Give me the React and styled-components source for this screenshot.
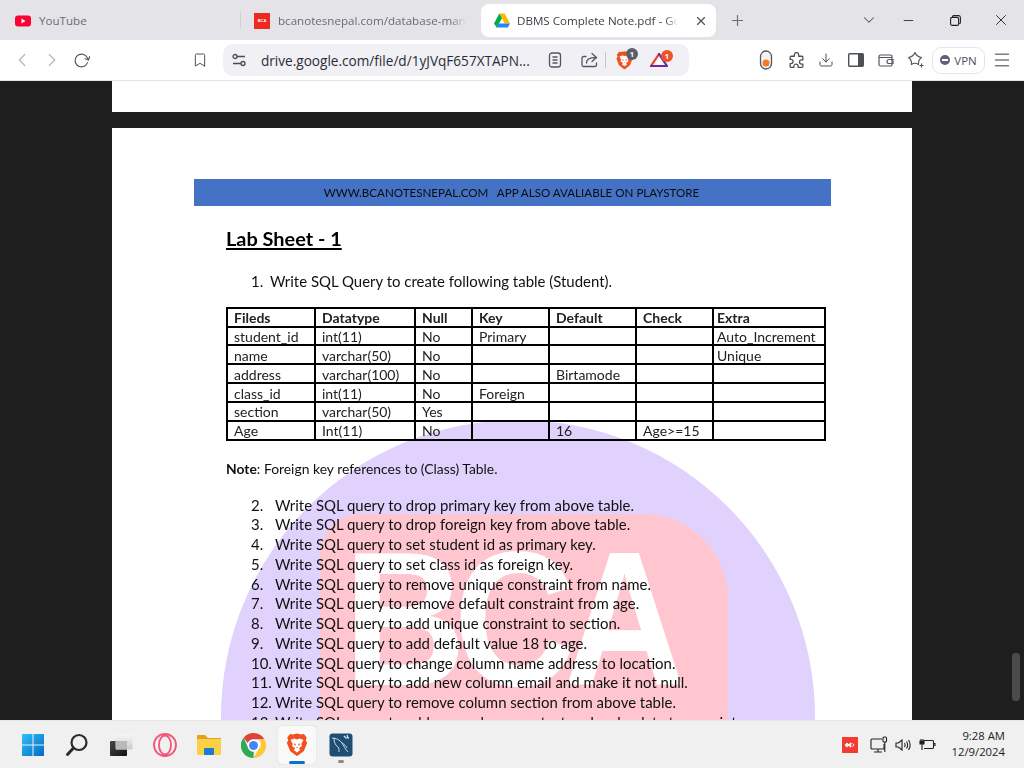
import React from "react";
import styled, { createGlobalStyle } from "styled-components";
import { ChevronLeft, ChevronRight, RotateCw, Bookmark, X, Plus, Minus, ChevronDown, Menu, Download } from "lucide-react";

const Global = createGlobalStyle`
  html, body { margin: 0; padding: 0; height: 100%; overflow: hidden; }
  body { font-family: "Open Sans", "Liberation Sans", sans-serif; background: #1e1e1e; }
  #root { height: 768px; width: 1024px; }
`;

const Screen = styled.div`
  width: 1024px; height: 768px; display: flex; flex-direction: column; overflow: hidden; position: relative;
`;
const TabStrip = styled.div`
  height: 40px; flex: none; display: flex; align-items: center; background: #e3e3e8;
`;
const Tab = styled.div`
  width: ${p => p.$w}px; height: 33px; margin-top: 1px; flex: none; display: flex; align-items: center; gap: ${p => p.$gap || 8}px;
  padding: 0 ${p => p.$pr || 0}px 0 ${p => p.$pl}px; box-sizing: border-box; position: relative;
  background: ${p => (p.$active ? "#fff" : "transparent")}; border-radius: 8px;
`;
const TabSep = styled.div`
  width: 1px; height: 16px; background: #cfcfd4; flex: none;
`;
const TabTitle = styled.span`
  font-size: 11.6px; color: ${p => (p.$active ? "#3c3f47" : "#6b6d75")}; white-space: nowrap; overflow: hidden; flex: 1;
  -webkit-mask-image: ${p => (p.$fade ? "linear-gradient(90deg,#000 92%,transparent)" : "none")};
  mask-image: ${p => (p.$fade ? "linear-gradient(90deg,#000 92%,transparent)" : "none")};
`;
const FaviconBCA = styled.div`
  width: 16px; height: 16px; background: #ee2a20; color: #fff; font: 700 4px "Liberation Sans", sans-serif;
  display: flex; align-items: center; justify-content: center; flex: none;
`;
const StripButton = styled.div`
  width: ${p => p.$w}px; flex: none; display: flex; align-items: center; justify-content: center; color: ${p => p.$c || "#1f2025"};
  margin-left: ${p => p.$ml || 0}px;
`;
const Toolbar = styled.div`
  flex: none; display: flex; align-items: center; background: #fff; padding: 0 7px; box-sizing: border-box; border-bottom: 1px solid #e3e3e8; height: 41px;
`;
const Cell = styled.div`
  width: 30px; height: 30px; flex: none; display: flex; align-items: center; justify-content: center; color: ${p => p.$c || "#4e5058"};
  margin-left: ${p => p.$ml || 0}px;
`;
const UrlPill = styled.div`
  width: 466px; height: 32px; margin-left: 8px; background: #f0f0f5; border-radius: 10px; display: flex; align-items: center; flex: none; padding-left: 8px; box-sizing: border-box;
`;
const UrlText = styled.span`
  font-size: 13.6px; color: #2a2d37; margin-left: 14px; width: 273px; white-space: nowrap; flex: none;
`;
const PillIcon = styled.div`
  width: ${p => p.$w || 24}px; flex: none; display: flex; align-items: center; justify-content: center; position: relative; color: #55575f; margin-left: ${p => p.$ml || 0}px;
`;
const Divider = styled.div`
  width: 1px; height: 16px; background: #c5c6cc; margin-left: 4px; flex: none;
`;
const Badge = styled.span`
  position: absolute; top: -3px; right: ${p => p.$r}px; width: 12px; height: 12px; border-radius: 50%; background: ${p => p.$bg}; color: #fff;
  font: 700 7.5px "Open Sans", sans-serif; display: flex; align-items: center; justify-content: center;
`;
const RightGroup = styled.div`
  margin-left: auto; display: flex; align-items: center;
`;
const Vpn = styled.div`
  width: 53px; height: 27px; margin-left: 1px; box-sizing: border-box; border: 1px solid #e4e4ea; border-radius: 9px; display: flex; align-items: center; justify-content: center; gap: 4px;
  font-size: 11.5px; color: #4e5058;
`;
const VpnDot = styled.span`
  width: 10px; height: 10px; border-radius: 50%; background: #5e6178; display: flex; align-items: center; justify-content: center;
  &::after { content: ""; width: 6px; height: 1.5px; background: #fff; }
`;
const Viewer = styled.main`
  flex: 1; min-height: 0; background: #1e1e1e; overflow: hidden; display: flex; flex-direction: column; align-items: center; gap: 16px; position: relative;
`;
const PageStub = styled.div`
  width: 800px; height: 31px; background: #fff; flex: none;
`;
const Page = styled.article`
  width: 800px; flex: none; background: #fff; position: relative; padding-top: 51px; box-sizing: border-box; height: 1000px; overflow: hidden;
  font-family: Lato, "Open Sans", sans-serif; color: #111;
`;
const Circle = styled.div`
  position: absolute; left: 109px; top: 292px; width: 594px; height: 594px; border-radius: 50%; background: #e0d2fc;
`;
const Square = styled.div`
  position: absolute; left: 208px; top: 386px; width: 408px; height: 500px; background: #ffc6d0; border-radius: 40px 85px 0 0;
`;
const WaterText = styled.div`
  position: absolute; left: 232px; top: 395px; font: 700 192px/1 "Liberation Sans", sans-serif; color: #fff; letter-spacing: -14px; white-space: nowrap;
  transform: scaleX(0.88); transform-origin: left top;
`;
const Content = styled.div`
  position: relative; filter: blur(0.25px);
`;
const Band = styled.div`
  width: 637px; height: 27px; margin-left: 82px; padding-right: 2px; box-sizing: border-box; background: #4472c4; display: flex; align-items: center; justify-content: center;
  font-size: 11.6px; color: #0c0c0c; white-space: pre;
`;
const Body = styled.div`
  padding-left: 114px; width: 599px;
`;
const Heading = styled.h1`
  margin: 20px 0 0; font-size: 19.9px; line-height: 24px; font-weight: 700; color: #000;
  text-decoration: underline; text-decoration-thickness: 2px; text-underline-offset: 2px;
`;
const Item = styled.div`
  display: flex; margin-left: 25px; margin-top: ${p => p.$mt || 0}px; font-size: ${p => p.$fs || 14.95}px; line-height: 19.75px; white-space: nowrap;
`;
const Num = styled.span`
  width: ${p => p.$w}px; flex: none;
`;
const Table = styled.table`
  border-collapse: collapse; table-layout: fixed; width: 598px; margin-top: 15px; font-size: 14px; border: 2px solid #000;
`;
const Td = styled.td`
  border: 2px solid #000; height: 15.33px; padding: 1.5px 0 0 ${p => p.$pl}px; line-height: 15.33px; white-space: nowrap; overflow: hidden; font-weight: ${p => (p.$h ? 700 : 400)};
  color: #222;
`;
const Note = styled.p`
  margin: 18px 0 0; font-size: 13.9px; line-height: 20px;
`;
const List = styled.div`
  margin-top: 17px;
`;
const Scrollbar = styled.div`
  position: absolute; right: 4px; top: 572px; width: 8px; height: 48px; background: #4a4c4b; border-radius: 4px;
`;
const Taskbar = styled.footer`
  height: 48px; flex: none; background: #f0f0f0; border-top: 1px solid #e6e6e6; box-sizing: border-box; display: flex; align-items: center; gap: 6px; padding-left: 14px; padding-right: 19px;
`;
const Pin = styled.div`
  width: 38px; height: 38px; flex: none; display: flex; align-items: center; justify-content: center; position: relative;
  margin-top: 1px; border-radius: 4px;
  background: ${p => (p.$open ? "#f9f9f9" : "transparent")};
  box-shadow: ${p => (p.$open ? "0 0 1px rgba(0,0,0,.25)" : "none")};
  &::after {
    content: ""; position: absolute; bottom: ${p => (p.$open ? "0" : "1px")}; left: 50%; transform: translateX(-50%);
    height: 3px; border-radius: 2px; width: ${p => (p.$open ? "16px" : p.$run ? "6px" : "0")}; background: ${p => (p.$open ? "#0a6fd1" : "#8a8a8a")};
  }
`;
const Tray = styled.div`
  margin-left: auto; display: flex; align-items: center; color: #222;
`;
const TrayIcon = styled.div`
  width: 24px; display: flex; justify-content: center; flex: none; margin-left: ${p => p.$ml || 0}px;
`;
const Clock = styled.div`
  margin-left: 12px; margin-top: -2px; text-align: right; font-size: 11.3px; line-height: 16px; color: #1c1c1c;
`;

const Slider = () => (
  <svg width="16" height="16" viewBox="0 0 16 16" fill="none" stroke="#4a4c55" strokeWidth="1.3">
    <circle cx="4" cy="4.5" r="2" /><circle cx="12" cy="11.5" r="2" />
    <path d="M6 4.5h8M2 11.5h8" />
  </svg>
);
const Doc = () => (
  <svg width="14" height="16" viewBox="0 0 14 16" fill="none" stroke="#55575f" strokeWidth="1.3">
    <rect x="1.5" y="1" width="11" height="14" rx="2.5" /><path d="M4.5 5h5M4.5 8h5M4.5 11h5" />
  </svg>
);
const Share = () => (
  <svg width="17" height="16" viewBox="0 0 17 16" fill="none" stroke="#55575f" strokeWidth="1.3" strokeLinejoin="round" strokeLinecap="round">
    <path d="M5 4.500H3a2 2 0 0 0-2 2V13a1.500 1.500 0 0 0 1.500 1.500h11.500A1.500 1.500 0 0 0 15.500 13V11" />
    <path d="M5.500 11C5.500 7.500 8 5.500 15 5.500" /><path d="M11 1.500 15.500 5.500 11 9.500" />
  </svg>
);
const BraveLogo = ({ size = 18 }) => (
  <svg width={size} height={size} viewBox="0 0 24 26">
    <path fill="#f1501f" d="M12 0.500 16.500 1.500 19.500 1 22.500 5 21.500 8 23 10.500 19.500 19.500 13 24.500 12 25 11 24.500 4.500 19.500 1 10.500 2.500 8 1.500 5 4.500 1 7.500 1.500Z" />
    <path fill="#fff" d="M12 7 15 6 19 7.500 16.500 12 17.500 14 14 16.500 15.500 18.500 12 21 8.500 18.500 10 16.500 6.500 14 7.500 12 5 7.500 9 6Z" />
    <path fill="#f1501f" d="M9.500 10.500 11 13 9 13.500ZM14.500 10.500 13 13 15 13.500ZM12 15l-1.500 1h3Z" />
  </svg>
);
const Triangle = () => (
  <svg width="18" height="14" viewBox="0 0 18 14">
    <path d="M9 1 1 13" fill="none" stroke="#ef3a25" strokeWidth="2.200" strokeLinecap="round" />
    <path d="M9 1 17 13H1" fill="none" stroke="#6d2aa0" strokeWidth="2.200" strokeLinejoin="round" strokeLinecap="round" />
    <path d="M9 6 12.500 11.500H5.500Z" fill="#fff" />
  </svg>
);
const Capsule = () => (
  <svg width="14" height="20" viewBox="0 0 14 20" fill="none">
    <rect x="1.500" y="1" width="11" height="18" rx="5.500" stroke="#55575f" strokeWidth="1.300" fill="#f2f2f4" />
    <circle cx="7" cy="13" r="3.500" fill="#f47b20" />
  </svg>
);
const PuzzleIcon = () => (
  <svg width="17" height="17" viewBox="0 0 16 16" fill="none" stroke="#4e5058" strokeWidth="1.200" strokeLinejoin="round">
    <path d="M6 2.500a2 2 0 0 1 4 0V4h3a1 1 0 0 1 1 1v2.500h-1.200a2 2 0 0 0 0 4H14v2a1 1 0 0 1-1 1H9.500v-1a2 2 0 0 0-4 0v1H3a1 1 0 0 1-1-1v-2.500h.8a2 2 0 0 0 0-4H2V5a1 1 0 0 1 1-1h3Z" />
  </svg>
);
const SidebarIcon = () => (
  <svg width="16" height="14" viewBox="0 0 16 14">
    <rect x="0.700" y="0.700" width="14.600" height="12.600" rx="1" fill="none" stroke="#4e5058" strokeWidth="1.400" />
    <rect x="10" y="1" width="5" height="12" fill="#4e5058" />
  </svg>
);
const Wallet = () => (
  <svg width="16" height="14" viewBox="0 0 16 14" fill="none" stroke="#55575f" strokeWidth="1.200">
    <path d="M1 3.500V11.500A1.500 1.500 0 0 0 2.500 13h10a1.500 1.500 0 0 0 1.500-1.500V3.500A1.500 1.500 0 0 0 12.500 2H2.500A1.500 1.500 0 0 0 1 3.500Z" />
    <path d="M1 4.500h13M15 6.500h-4a1.500 1.500 0 0 0 0 4h4Z" />
  </svg>
);
const Sparkle = () => (
  <svg width="18" height="18" viewBox="0 0 18 18" fill="none" stroke="#55575f" strokeWidth="1.200" strokeLinejoin="round">
    <path d="M8 1.500Q9.500 5.500 14.500 6.500Q11 9 11.500 13.500Q8 11 4.500 13.500Q5 9 1.500 6.500Q6.500 5.500 8 1.500Z" />
    <path d="M14.500 12.500v4M12.500 14.500h4" />
  </svg>
);
const WinLogo = () => (
  <svg width="24" height="24" viewBox="0 0 24 24">
    <defs><linearGradient id="w" x1="0" y1="0" x2="1" y2="1"><stop offset="0" stopColor="#2dc1f5" /><stop offset="1" stopColor="#0669c9" /></linearGradient></defs>
    <path fill="url(#w)" d="M1 1h10.500v10.500H1zM12.500 1H23v10.500H12.500zM1 12.500h10.500V23H1zM12.500 12.500H23V23H12.500z" />
  </svg>
);
const SearchIcon = () => (
  <svg width="24" height="24" viewBox="0 0 24 24" fill="none" stroke="#2b2b2b" strokeLinecap="round">
    <circle cx="14" cy="9.500" r="7.500" strokeWidth="2.200" /><path d="M8.500 15 2.500 21.500" strokeWidth="3" />
  </svg>
);
const TaskView = () => (
  <svg width="24" height="24" viewBox="0 0 24 24">
    <defs><linearGradient id="t" x1="0" y1="0" x2="0" y2="1"><stop offset="0" stopColor="#f7f7f7" /><stop offset="1" stopColor="#c9c9c9" /></linearGradient>
      <linearGradient id="td" x1="0" y1="0" x2="1" y2="1"><stop offset="0" stopColor="#484848" /><stop offset="1" stopColor="#111" /></linearGradient></defs>
    <rect x="1" y="8" width="17" height="15" rx="1" fill="url(#td)" />
    <rect x="6.500" y="1.500" width="17" height="15" rx="1" fill="url(#t)" />
    <rect x="7" y="8" width="11" height="8.500" fill="#b9b9b9" />
  </svg>
);
const Opera = () => (
  <svg width="26" height="26" viewBox="0 0 26 26" fill="none" stroke="#f1567a">
    <circle cx="13" cy="13" r="11" strokeWidth="1.800" /><ellipse cx="13" cy="13" rx="6" ry="9.500" strokeWidth="1.800" />
  </svg>
);
const Folder = () => (
  <svg width="26" height="24" viewBox="0 0 26 24">
    <path fill="#e2a21a" d="M1 3a1 1 0 0 1 1-1h7l3 3h13v5H1z" />
    <path fill="#fbd045" d="M1 6h24v15a1 1 0 0 1-1 1H2a1 1 0 0 1-1-1z" />
    <rect x="8" y="15" width="10" height="7" rx="1" fill="#1a7bd0" />
  </svg>
);
const Chrome = () => (
  <svg width="25" height="25" viewBox="0 0 24 24">
    <path fill="#db4437" d="M12 0a12 12 0 0 1 10.400 6H12a6 6 0 0 0-5.600 3.700L2.500 4.500A12 12 0 0 1 12 0Z" />
    <path fill="#fcc934" d="M22.400 6A12 12 0 0 1 12 24l5.200-9a6 6 0 0 0 0-9Z" />
    <path fill="#33a853" d="M2.500 4.500 7.200 15a6 6 0 0 0 5 3l-.2 6A12 12 0 0 1 2.500 4.500Z" />
    <circle cx="12" cy="12" r="5.500" fill="#fff" /><circle cx="12" cy="12" r="4.300" fill="#4285f4" />
  </svg>
);
const Workbench = () => (
  <svg width="24" height="24" viewBox="0 0 24 24">
    <rect x="0.500" y="0.500" width="23" height="23" rx="3" fill="#1f4e74" />
    <path d="M3 5c4 0 8 2 10 5s3 6 6 9M5 5c0 4 1 7 4 9 1 1 1 3 1 5M13 10c2 1 4 3 5 5" fill="none" stroke="#dfe8ef" strokeWidth="0.900" />
    <path d="M15 3l2 2 3 0M18 2l1 3" fill="none" stroke="#dfe8ef" strokeWidth="1.200" />
  </svg>
);
const RedApp = () => (
  <svg width="16" height="16" viewBox="0 0 16 16">
    <rect width="16" height="16" fill="#f23c32" />
    <path fill="#fff" d="M2.500 8 5 5.500 7.500 8 5 10.500ZM8.500 5.500 9.800 6.800 8.600 8l1.200 1.200L8.500 10.500 6 8ZM10 5.500 12.500 8 10 10.500 11.200 8Z" />
  </svg>
);
const Net = () => (
  <svg width="18" height="17" viewBox="0 0 18 17" fill="none" stroke="#222" strokeWidth="1.100">
    <path d="M12 3H2a1 1 0 0 0-1 1v8a1 1 0 0 0 1 1h12v-5" /><path d="M8 13v3M4 16h8" />
    <rect x="13" y="1" width="3.500" height="5" rx="1" /><path d="M14.800 6v10" />
  </svg>
);
const Speaker = () => (
  <svg width="17" height="14" viewBox="0 0 17 14" fill="none" stroke="#222" strokeWidth="1.100">
    <path d="M1 5v4h2.500L7 12V2L3.500 5Z" /><path d="M9.500 5c.7 1.200.7 2.800 0 4M11.500 3.500c1.300 2 1.300 5 0 7M13.500 2c2 3 2 7 0 10" />
  </svg>
);
const Battery = () => (
  <svg width="17" height="13" viewBox="0 0 17 13" fill="none" stroke="#222" strokeWidth="1.100">
    <path d="M5 2.500h8.500a1 1 0 0 1 1 1v6a1 1 0 0 1-1 1H5" /><path d="M15 5.500h1v2h-1" />
    <path d="M1 3h4v3H1zM2 1v2M4 1v2M3 6v6" fill="#222" />
  </svg>
);
const DriveLogo = () => (
  <svg width="16" height="15" viewBox="0 0 16 15" style={{ flex: "none" }}>
    <path fill="#ffba00" d="M5.300 0.500h5.400L16 10.500h-5.300Z" />
    <path fill="#2684fc" d="M2.200 14.500h11.600L16 10.500H5Z" />
    <path fill="#00ac47" d="M5.300 0.500 8 5.200 2.700 14.500 0 10.500Z" />
  </svg>
);
const YouTubeFav = () => (
  <svg width="16" height="12" viewBox="0 0 16 12" style={{ flex: "none" }}>
    <rect width="16" height="11" y="0.500" rx="3" fill="#ff0033" /><path d="M6.500 3.500v5L10.500 6Z" fill="#fff" />
  </svg>
);

const head = ["Fileds", "Datatype", "Null", "Key", "Default", "Check", "Extra"];
const rows = [
  ["student_id", "int(11)", "No", "Primary", "", "", "Auto_Increment"],
  ["name", "varchar(50)", "No", "", "", "", "Unique"],
  ["address", "varchar(100)", "No", "", "Birtamode", "", ""],
  ["class_id", "int(11)", "No", "Foreign", "", "", ""],
  ["section", "varchar(50)", "Yes", "", "", "", ""],
  ["Age", "Int(11)", "No", "", "16", "Age>=15", ""],
];
const cols = [88, 100, 57, 77, 87, 77, 112];
const items = [
  "Write SQL query to drop primary key from above table.",
  "Write SQL query to drop foreign key from above table.",
  "Write SQL query to set student id as primary key.",
  "Write SQL query to set class id as foreign key.",
  "Write SQL query to remove unique constraint from name.",
  "Write SQL query to remove default constraint from age.",
  "Write SQL query to add unique constraint to section.",
  "Write SQL query to add default value 18 to age.",
  "Write SQL query to change column name address to location.",
  "Write SQL query to add new column email and make it not null.",
  "Write SQL query to remove column section from above table.",
  "Write SQL query to add new column contact and make data type as integer.",
];

export default function App() {
  return (
    <Screen>
      <Global />
      <TabStrip>
        <Tab $w={240} $pl={15}><YouTubeFav /><TabTitle>YouTube</TabTitle></Tab>
        <TabSep />
        <Tab $w={240} $pl={13} $pr={15}><FaviconBCA>BCA</FaviconBCA><TabTitle $fade>bcanotesnepal.com/database-management</TabTitle></Tab>
        <Tab $w={235} $pl={13} $pr={8} $active $gap={7}>
          <DriveLogo />
          <TabTitle $active $fade>DBMS Complete Note.pdf - Google Drive</TabTitle>
          <StripButton $w={15} $ml={8} $c="#4e5058"><X size={14} strokeWidth={2} /></StripButton>
        </Tab>
        <StripButton $w={30} $ml={6} $c="#6b6d75"><Plus size={17} strokeWidth={1.6} /></StripButton>
        <StripButton $w={30} $ml={102} $c="#55575f"><ChevronDown size={18} strokeWidth={1.4} /></StripButton>
        <StripButton $w={46} $ml={1}><Minus size={15} strokeWidth={1.3} /></StripButton>
        <StripButton $w={46} $ml={1}>
          <svg width="11" height="11" viewBox="0 0 11 11" fill="none" stroke="#1f2025" strokeWidth="1.100"><rect x="0.600" y="2.400" width="8" height="8" rx="1.500" /><path d="M2.500 2.400V1.800A1.200 1.200 0 0 1 3.700.6h5A1.800 1.800 0 0 1 10.400 2.400v5a1.200 1.200 0 0 1-1.200 1.200" /></svg>
        </StripButton>
        <StripButton $w={46}><X size={18} strokeWidth={1.2} /></StripButton>
      </TabStrip>
      <Toolbar>
        <Cell $c="#b5b6bb"><ChevronLeft size={22} strokeWidth={1.3} /></Cell>
        <Cell $c="#b5b6bb"><ChevronRight size={22} strokeWidth={1.3} /></Cell>
        <Cell $ml={-1}><RotateCw size={17} strokeWidth={1.6} style={{ transform: "rotate(20deg)" }} /></Cell>
        <Cell $ml={89}><Bookmark size={16} strokeWidth={1.5} /></Cell>
        <UrlPill>
          <Slider />
          <UrlText>drive.google.com/file/d/1yJVqF657XTAPN...</UrlText>
          <PillIcon $ml={9}><Doc /></PillIcon>
          <PillIcon $ml={10}><Share /></PillIcon>
          <Divider />
          <PillIcon $ml={6}><BraveLogo size={19} /><Badge $r={-2} $bg="#5a5e6b">1</Badge></PillIcon>
          <PillIcon $ml={11}><Triangle /><Badge $r={-2} $bg="#f0522a">1</Badge></PillIcon>
        </UrlPill>
        <RightGroup>
          <Cell><Capsule /></Cell>
          <Cell><PuzzleIcon /></Cell>
          <Cell><Download size={16} strokeWidth={1.5} /></Cell>
          <Cell><SidebarIcon /></Cell>
          <Cell><Wallet /></Cell>
          <Cell><Sparkle /></Cell>
          <Vpn><VpnDot />VPN</Vpn>
          <Cell $ml={2} $c="#3a3c44"><Menu size={20} strokeWidth={1.2} /></Cell>
        </RightGroup>
      </Toolbar>
      <Viewer>
        <PageStub />
        <Page>
          <Circle /><Square /><WaterText aria-hidden="true">BCA</WaterText>
          <Content>
            <Band>{"WWW.BCANOTESNEPAL.COM   APP ALSO AVALIABLE ON PLAYSTORE"}</Band>
            <Body>
              <Heading>Lab Sheet - 1</Heading>
              <Item $mt={22}><Num $w={19}>1.</Num>Write SQL Query to create following table (Student).</Item>
              <Table>
                <colgroup>{cols.map((w, i) => <col key={i} width={w} />)}</colgroup>
                <tbody>
                  <tr>{head.map((h, i) => <Td key={h} $h $pl={i === 6 ? 3 : 6}>{h}</Td>)}</tr>
                  {rows.map(r => <tr key={r[0]}>{r.map((c, i) => <Td key={i} $pl={i === 6 ? 3 : 6}>{c}</Td>)}</tr>)}
                </tbody>
              </Table>
              <Note><b>Note</b>: Foreign key references to (Class) Table.</Note>
              <List>
                {items.map((t, i) => <Item key={i}><Num $w={24}>{i + 2}.</Num>{t}</Item>)}
              </List>
            </Body>
          </Content>
        </Page>
        <Scrollbar />
      </Viewer>
      <Taskbar>
        <Pin><WinLogo /></Pin>
        <Pin><SearchIcon /></Pin>
        <Pin><TaskView /></Pin>
        <Pin><Opera /></Pin>
        <Pin><Folder /></Pin>
        <Pin><Chrome /></Pin>
        <Pin $open><BraveLogo size={24} /></Pin>
        <Pin $run><Workbench /></Pin>
        <Tray>
          <TrayIcon><RedApp /></TrayIcon>
          <TrayIcon $ml={5}><Net /></TrayIcon>
          <TrayIcon><Speaker /></TrayIcon>
          <TrayIcon><Battery /></TrayIcon>
          <Clock>9:28 AM<br />12/9/2024</Clock>
        </Tray>
      </Taskbar>
    </Screen>
  );
}
